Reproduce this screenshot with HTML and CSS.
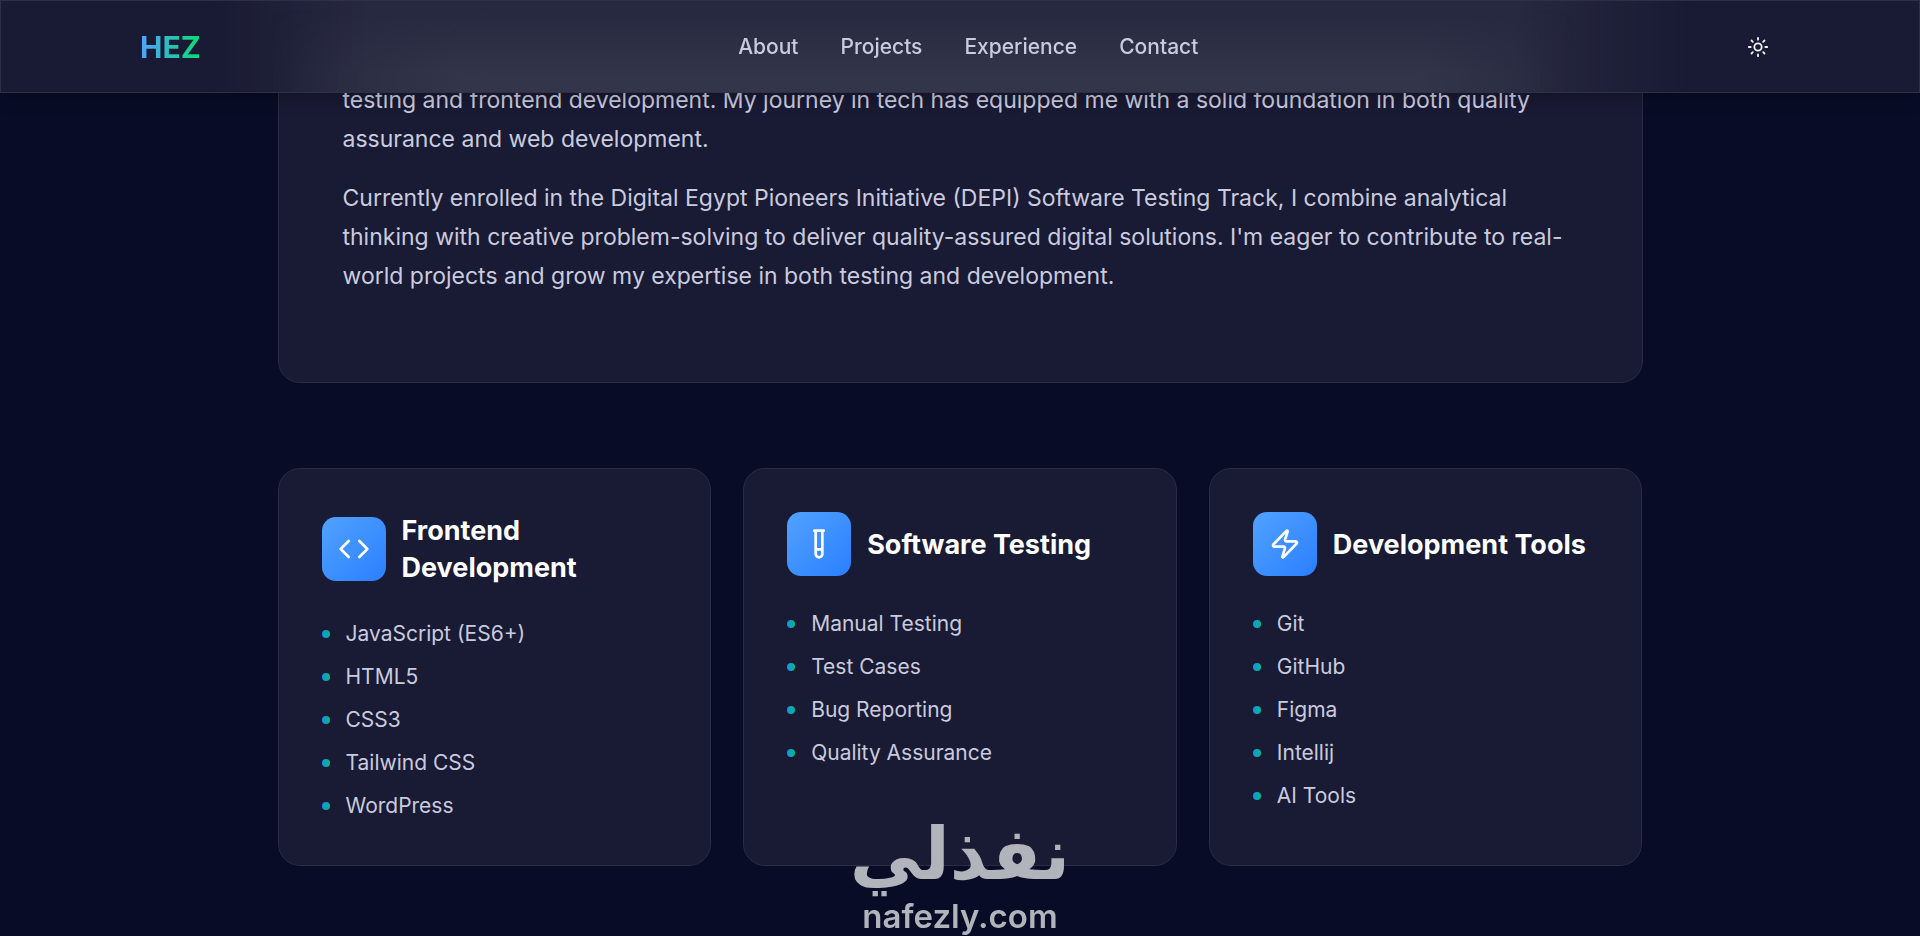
FILE: index.html
```html
<!DOCTYPE html>
<html lang="en">
<head>
    <meta charset="UTF-8">
    <meta name="viewport" content="width=device-width, initial-scale=1.0">
    <title>HEZ</title>
    <link rel="stylesheet" href="styles.css">
</head>
<body>
    <header class="navbar">
        <a href="#" class="logo">HEZ</a>
        <nav class="nav-links">
            <a href="#about">About</a>
            <a href="#projects">Projects</a>
            <a href="#experience">Experience</a>
            <a href="#contact">Contact</a>
        </nav>
        <button type="button" class="theme-toggle" aria-label="Toggle theme">
            <svg viewBox="0 0 24 24">
                <circle cx="12" cy="12" r="4"/>
                <path d="M12 2v2M12 20v2M4.93 4.93l1.41 1.41M17.66 17.66l1.41 1.41M2 12h2M20 12h2M6.34 17.66l-1.41 1.41M19.07 4.93l-1.41 1.41"/>
            </svg>
        </button>
    </header>

    <main class="container" id="about">
        <section class="about-card">
            <p>testing and frontend development. My journey in tech has equipped me with a solid foundation in both quality assurance and web development.</p>
            <p>Currently enrolled in the Digital Egypt Pioneers Initiative (DEPI) Software Testing Track, I combine analytical thinking with creative problem-solving to deliver quality-assured digital solutions. I'm eager to contribute to real-world projects and grow my expertise in both testing and development.</p>
        </section>

        <section class="skills-grid">
            <div class="skill-card">
                <div class="skill-header">
                    <div class="icon">
                        <svg viewBox="0 0 24 24"><path d="m16 18 6-6-6-6M8 6l-6 6 6 6"/></svg>
                    </div>
                    <h3>Frontend Development</h3>
                </div>
                <ul>
                    <li>JavaScript (ES6+)</li>
                    <li>HTML5</li>
                    <li>CSS3</li>
                    <li>Tailwind CSS</li>
                    <li>WordPress</li>
                </ul>
            </div>
            <div class="skill-card">
                <div class="skill-header">
                    <div class="icon">
                        <svg viewBox="0 0 24 24"><path d="M14.5 2v17.5c0 1.4-1.1 2.5-2.5 2.5s-2.5-1.1-2.5-2.5V2M8.5 2h7M14.5 16h-5"/></svg>
                    </div>
                    <h3>Software Testing</h3>
                </div>
                <ul>
                    <li>Manual Testing</li>
                    <li>Test Cases</li>
                    <li>Bug Reporting</li>
                    <li>Quality Assurance</li>
                </ul>
            </div>
            <div class="skill-card">
                <div class="skill-header">
                    <div class="icon">
                        <svg viewBox="0 0 24 24"><path d="M4 14a1 1 0 0 1-.78-1.63l9.9-10.2a.5.5 0 0 1 .86.46l-1.92 6.02A1 1 0 0 0 13 10h7a1 1 0 0 1 .78 1.63l-9.9 10.2a.5.5 0 0 1-.86-.46l1.92-6.02A1 1 0 0 0 11 14z"/></svg>
                    </div>
                    <h3>Development Tools</h3>
                </div>
                <ul>
                    <li>Git</li>
                    <li>GitHub</li>
                    <li>Figma</li>
                    <li>Intellij</li>
                    <li>AI Tools</li>
                </ul>
            </div>
        </section>
    </main>

    <div class="watermark">
        <span class="watermark-ar" lang="ar" dir="rtl">نفذلي</span>
        <span class="watermark-en">nafezly.com</span>
    </div>
</body>
</html>
```

FILE: styles.css
```css
* {
    margin: 0;
    padding: 0;
    box-sizing: border-box;
}

body {
    font-family: Inter, 'Liberation Sans', sans-serif;
    color: #c9cbdf;
    background: #080c26;
    min-height: 100vh;
    overflow: hidden;
}

/* Navbar */
.navbar {
    position: fixed;
    top: 0;
    left: 0;
    right: 0;
    z-index: 10;
    display: flex;
    justify-content: space-between;
    align-items: center;
    height: 93px;
    padding: 0 139px;
    background: #191a33;
    border: 1px solid #2e3046;
    box-shadow: 0 4px 16px rgba(0,0,0,0.25);
}

.navbar::before,
.navbar::after {
    content: '';
    position: absolute;
    inset: 0;
    z-index: -1;
}

.navbar::before {
    background: #272940;
    mask-image: linear-gradient(90deg, transparent 11%, #000 19%, #000 79%, transparent 88%);
}

.navbar::after {
    background: linear-gradient(180deg, transparent 10%, #33354a 80%);
    mask-image: linear-gradient(90deg, transparent 14%, #000 24%, #000 74%, transparent 82%);
}

.logo {
    font-size: 30px;
    font-weight: 700;
    line-height: 40px;
    text-decoration: none;
    color: transparent;
    background: linear-gradient(90deg, #51a2ff, #05df72);
    background-clip: text;
}

.nav-links {
    display: flex;
    gap: 42px;
}

.nav-links a {
    color: #c9cbdf;
    font-size: 21px;
    font-weight: 500;
    text-decoration: none;
}

.theme-toggle {
    display: flex;
    padding: 11px;
    border: none;
    background: none;
    color: #f0f1fa;
    cursor: pointer;
}

.theme-toggle svg {
    width: 22px;
    height: 22px;
}

svg {
    fill: none;
    stroke: currentColor;
    stroke-width: 2;
    stroke-linecap: round;
    stroke-linejoin: round;
}

/* Content */
.container {
    max-width: 1365px;
    margin: 0 auto;
}

.about-card,
.skill-card {
    background: #191a33;
    border: 1px solid #2b2c43;
    border-radius: 22px;
}

.about-card {
    padding: 80px 64px 66px;
    margin-bottom: 85px;
}

.about-card p {
    font-size: 23px;
    line-height: 39px;
    margin-bottom: 20px;
}

.skills-grid {
    display: grid;
    grid-template-columns: repeat(3, 1fr);
    gap: 32px;
}

.skill-card {
    padding: 43px;
}

.skill-header {
    display: flex;
    align-items: center;
    gap: 16px;
    margin-bottom: 32px;
}

.skill-header h3 {
    color: #fff;
    font-size: 27px;
    font-weight: 700;
    line-height: 37px;
}

.icon {
    display: flex;
    align-items: center;
    justify-content: center;
    flex-shrink: 0;
    width: 64px;
    height: 64px;
    border-radius: 14px;
    color: #fff;
    background: linear-gradient(135deg, #51a2ff, #2b7fff);
}

.icon svg {
    width: 32px;
    height: 32px;
}

.skill-card ul {
    display: flex;
    flex-direction: column;
    gap: 11px;
    list-style: none;
}

.skill-card li {
    display: flex;
    align-items: center;
    gap: 16px;
    font-size: 21px;
    line-height: 32px;
}

.skill-card li::before {
    content: '';
    width: 8px;
    height: 8px;
    border-radius: 50%;
    background: linear-gradient(90deg, #1590f0, #00bc7d);
}

/* Watermark */
.watermark {
    position: fixed;
    left: 0;
    right: 0;
    bottom: 0;
    z-index: 20;
    display: flex;
    flex-direction: column;
    align-items: center;
    color: #b1b4bb;
    pointer-events: none;
}

.watermark-ar {
    font-family: 'DejaVu Sans', sans-serif;
    font-size: 72px;
    font-weight: 700;
    line-height: 84px;
}

.watermark-en {
    font-size: 33px;
    font-weight: 600;
    line-height: 40px;
}
```
